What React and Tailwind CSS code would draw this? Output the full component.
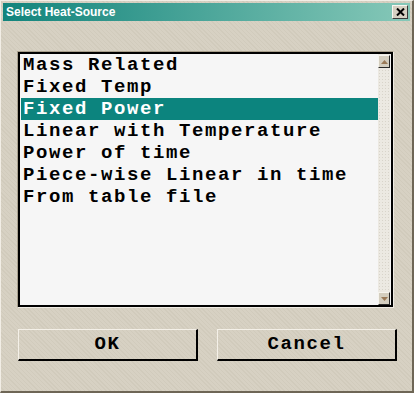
import React from "react";

const items = [
  "Mass Related",
  "Fixed Temp",
  "Fixed Power",
  "Linear with Temperature",
  "Power of time",
  "Piece-wise Linear in time",
  "From table file",
];

const tex =
  "bg-[repeating-linear-gradient(45deg,#d7d1c3_0px,#d7d1c3_2px,#d1cbbc_2px,#d1cbbc_3px)]";

export default function App() {
  return (
    <div
      className={`w-[414px] h-[393px] ${tex} border-t border-l border-[#f2eee6] border-r-2 border-b-2 border-r-[#6e6656] border-b-[#6e6656] flex flex-col box-border`}
    >
      {/* Title bar */}
      <div className="mt-[2px] ml-[2px] mr-[2px] h-[18px] flex items-center justify-between bg-[linear-gradient(to_right,#12847c,#86c8b8)] pl-[3px] pr-[2px]">
        <span
          className="text-white font-bold text-[12px] leading-none"
          style={{ fontFamily: '"Liberation Sans", Arial, sans-serif' }}
        >
          Select Heat-Source
        </span>
        <div className="w-[16px] h-[14px] bg-[#d6d0c2] border-t border-l border-[#f8f6f0] border-r border-b border-r-[#3a3a3a] border-b-[#3a3a3a] flex items-center justify-center">
          <svg width="9" height="8" viewBox="0 0 9 8">
            <path d="M1 0.5 L8 7.5 M8 0.5 L1 7.5" stroke="#000" strokeWidth="2" />
          </svg>
        </div>
      </div>

      {/* List box */}
      <div className="mt-[30px] ml-[16px] w-[377px] h-[257px] border border-[#f0ece4] border-t-[#a89f8c] border-l-[#a89f8c]">
        <div className="w-full h-full border-2 border-black bg-[#f6f6f6] flex">
          <div
            className="flex-1 flex flex-col font-bold text-[19px] tracking-[1.6px] text-black"
            style={{ fontFamily: '"Liberation Mono", "Courier New", monospace' }}
          >
            {items.map((t, i) => (
              <div
                key={t}
                className={
                  i === 2
                    ? "h-[22px] leading-[22px] pl-[2px] ml-px bg-[#0c847e] text-white whitespace-nowrap"
                    : "h-[22px] leading-[22px] pl-[2px] ml-px whitespace-nowrap"
                }
              >
                {t}
              </div>
            ))}
          </div>
          <div className="w-[12px] mr-px flex flex-col bg-[#ece9e2] bg-[radial-gradient(#d8d4ca_0.8px,transparent_0.9px)] bg-[length:3px_3px]">
            <div className="h-[13px] mt-px bg-[#d4cebf] border-r border-b border-[#2a2a2a] border-t border-l border-t-[#f6f4ee] border-l-[#f6f4ee] flex items-center justify-center">
              <svg width="7" height="4" viewBox="0 0 7 4">
                <path d="M3.5 0 L7 4 L0 4 Z" fill="#9a7a58" />
              </svg>
            </div>
            <div className="flex-1" />
            <div className="h-[13px] bg-[#d4cebf] border-r border-b border-[#2a2a2a] border-t border-l border-t-[#f6f4ee] border-l-[#f6f4ee] flex items-center justify-center">
              <svg width="7" height="4" viewBox="0 0 7 4">
                <path d="M0 0 L7 0 L3.5 4 Z" fill="#9a7a58" />
              </svg>
            </div>
          </div>
        </div>
      </div>

      {/* Buttons */}
      <div
        className="mt-[21px] ml-[17px] flex gap-[19px] font-bold text-[19px] tracking-[1.6px] text-black"
        style={{ fontFamily: '"Liberation Mono", "Courier New", monospace' }}
      >
        <div className="w-[180px] h-[32px] border border-t-[#f4f0e8] border-l-[#f4f0e8] border-r-2 border-b-2 border-r-black border-b-black flex items-center justify-center">
          OK
        </div>
        <div className="w-[180px] h-[32px] border border-t-[#f4f0e8] border-l-[#f4f0e8] border-r-2 border-b-2 border-r-black border-b-black flex items-center justify-center">
          Cancel
        </div>
      </div>
    </div>
  );
}
